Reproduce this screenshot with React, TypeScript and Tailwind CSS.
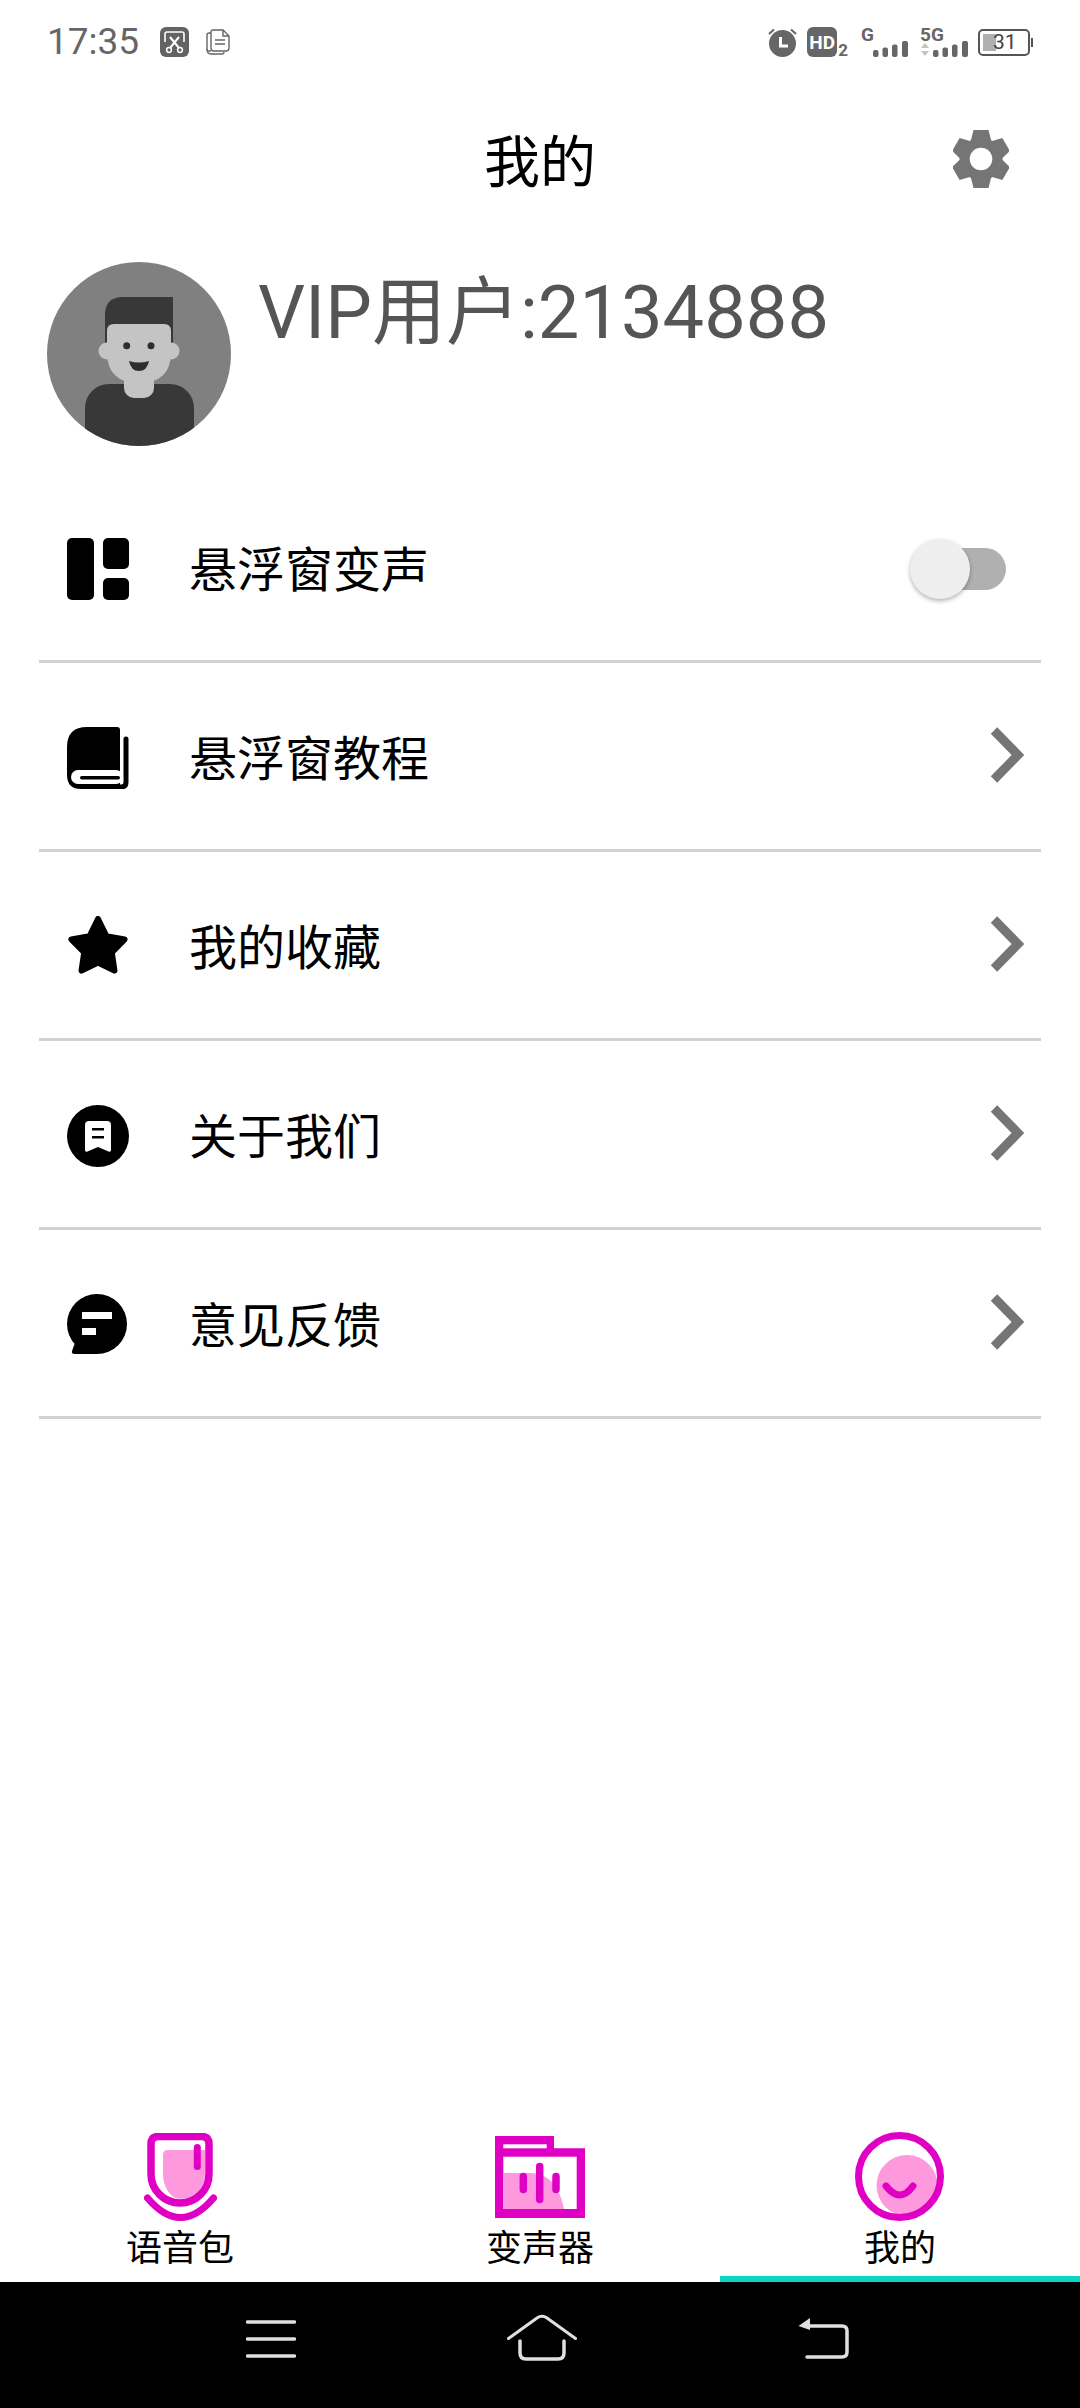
import React from "react";

const FONT = "font-['Roboto','Noto_Sans_CJK_SC',sans-serif]";

function Gear() {
  return (
    <svg width="56" height="58" viewBox="-28 -29 56 58" aria-hidden="true">
      {[0, 60, 120, 180, 240, 300].map((a) => (
        <path key={a} d="M-7.5 -29 L7.5 -29 L10.5 -17 L-10.5 -17 Z" transform={`rotate(${a})`} fill="#757575" />
      ))}
      <circle r="21.5" fill="#757575" />
      <circle r="11.3" fill="#ffffff" />
    </svg>
  );
}

function Avatar() {
  return (
    <svg width="184" height="184" viewBox="0 0 184 184" aria-hidden="true" className="shrink-0">
      <defs>
        <clipPath id="avatarClip">
          <circle cx="92" cy="92" r="92" />
        </clipPath>
      </defs>
      <circle cx="92" cy="92" r="92" fill="#808080" />
      <g clipPath="url(#avatarClip)">
        <rect x="38" y="122" width="109" height="80" rx="24" fill="#383838" />
        <rect x="77" y="100" width="30" height="36" rx="10" fill="#c4c4c4" />
        <path d="M58 82 V53 Q58 35 76 35 H126 V82 Z" fill="#383838" />
        <circle cx="60" cy="89" r="8.5" fill="#c4c4c4" />
        <circle cx="124" cy="89" r="8.5" fill="#c4c4c4" />
        <path d="M60 69 Q60 62 67 62 H117 Q124 62 124 69 V90 Q124 121 92 121 Q60 121 60 90 Z" fill="#c4c4c4" />
        <circle cx="79.7" cy="83.7" r="3.5" fill="#2e2e2e" />
        <circle cx="104" cy="83.7" r="3.5" fill="#2e2e2e" />
        <path d="M82 99 Q92 102 102 99 Q100 109 92 109 Q84 109 82 99 Z" fill="#2e2e2e" />
      </g>
    </svg>
  );
}

function IconPanels() {
  return (
    <svg width="62" height="62" viewBox="0 0 62 62" aria-hidden="true">
      <rect x="0" y="0" width="27" height="62" rx="5" />
      <rect x="36" y="0" width="26" height="31" rx="5" />
      <rect x="36" y="40" width="26" height="22" rx="5" />
    </svg>
  );
}

function IconBook() {
  return (
    <svg width="64" height="62" viewBox="0 0 64 62" aria-hidden="true">
      <path d="M0 20 Q0 0 20 0 H50 Q53 0 53 3 V62 H14 Q0 62 0 48 Z" />
      <path d="M59 12 V55 Q59 60 54 60 H30" fill="none" stroke="#000" strokeWidth="5" strokeLinecap="round" />
      <rect x="4" y="43" width="52" height="14" rx="7" fill="#fff" />
      <rect x="13" y="49" width="40" height="3.5" rx="1.7" />
    </svg>
  );
}

function IconStar() {
  return (
    <svg width="62" height="62" viewBox="0 0 62 62" aria-hidden="true">
      <polygon
        points="31,3 39.5,20.3 57.6,23.35 44.8,36.5 47.46,54.65 31,46.5 14.54,54.65 17.2,36.5 4.4,23.35 22.5,20.3"
        stroke="#000"
        strokeWidth="6"
        strokeLinejoin="round"
      />
    </svg>
  );
}

function IconAbout() {
  return (
    <svg width="62" height="62" viewBox="0 0 62 62" aria-hidden="true">
      <circle cx="31" cy="31" r="31" />
      <path d="M18 20 Q18 16 22 16 H40 Q44 16 44 20 V45 Q44 47.5 41.5 46.5 L31 42 L20.5 46.5 Q18 47.5 18 45 Z" fill="#fff" />
      <rect x="25" y="23" width="12" height="2.5" />
      <rect x="25" y="31" width="12" height="2.5" />
    </svg>
  );
}

function IconChat() {
  return (
    <svg width="62" height="62" viewBox="0 0 62 62" aria-hidden="true">
      <circle cx="30" cy="30" r="30" />
      <path d="M9 46 L5 57 Q4 60 8 60 H30 Z" />
      <rect x="15" y="18" width="30" height="7" fill="#fff" />
      <rect x="15" y="34" width="14" height="7" fill="#fff" />
    </svg>
  );
}

function Chevron() {
  return (
    <svg width="34" height="56" viewBox="0 0 34 56" aria-hidden="true">
      <path d="M4 3.5 L28 28 L4 52.5" fill="none" stroke="#757575" strokeWidth="9" />
    </svg>
  );
}

function Toggle() {
  return (
    <div className="relative h-[60px] w-[96px]">
      <div className="absolute left-[14px] top-[9px] h-[42px] w-[82px] rounded-full bg-[#b0b0b0]" />
      <div className="absolute left-0 top-0 h-[60px] w-[60px] rounded-full bg-[#eeeeee] shadow-[0_2px_4px_rgba(0,0,0,0.3)]" />
    </div>
  );
}

function Row({ icon, label, right }: { icon: React.ReactNode; label: string; right: React.ReactNode }) {
  return (
    <div className="flex h-[189px] items-center border-b-[3px] border-[#d2d2d2] pt-[3px]">
      <div className="ml-[28px] flex w-[122px] shrink-0 items-center">{icon}</div>
      <div className="flex-1 pt-[5px] text-[48px] leading-[56px] text-black">{label}</div>
      {right}
    </div>
  );
}

function TabVoice() {
  return (
    <svg width="73" height="88" viewBox="0 0 73 88" aria-hidden="true">
      <path d="M19 22 Q19 17 24 17 H61 V41 A25 25 0 0 1 36 66 A18 25 0 0 1 19 41 Z" fill="#ff99dd" />
      <path d="M7 11 Q7 3.5 14 3.5 H58 Q65 3.5 65 11 V41 A29 29 0 0 1 7 41 Z" fill="none" stroke="#e000c4" strokeWidth="7.5" />
      <path d="M53.3 14.5 V33.5" stroke="#e000c4" strokeWidth="7" strokeLinecap="round" />
      <path d="M3.5 65 Q36.5 104 69.5 65" fill="none" stroke="#e000c4" strokeWidth="7" strokeLinecap="round" />
    </svg>
  );
}

function TabChanger() {
  return (
    <svg width="90" height="82" viewBox="0 0 90 82" aria-hidden="true">
      <path d="M0 0 H59 V12.3 H90 V82 H0 Z" fill="#e000c4" />
      <rect x="8.3" y="8.3" width="43.4" height="4" fill="#fff" />
      <rect x="8.3" y="20.7" width="73.4" height="52.3" fill="#fff" />
      <path d="M8.3 73 V37 H35 Q62 37 69 73 Z" fill="#ff99dd" />
      <path d="M28.3 40.5 V53.5 M44.7 30.5 V63.5 M61 40.5 V53.5" stroke="#e000c4" strokeWidth="7.5" strokeLinecap="round" />
    </svg>
  );
}

function TabMine() {
  return (
    <svg width="90" height="90" viewBox="0 0 90 90" aria-hidden="true">
      <circle cx="52" cy="53.5" r="30.5" fill="#ff99dd" />
      <circle cx="44.5" cy="44.5" r="41" fill="none" stroke="#e000c4" strokeWidth="7" />
      <path d="M31 54 Q45 72 58 54" fill="none" stroke="#e000c4" strokeWidth="7" strokeLinecap="round" />
    </svg>
  );
}

function Tab({ icon, label, active }: { icon: React.ReactNode; label: string; active?: boolean }) {
  return (
    <div className={active ? "flex flex-col items-center border-b-[6px] border-[#0dd3c5]" : "flex flex-col items-center border-b-[6px] border-transparent"}>
      <div className="flex h-[90px] items-center">{icon}</div>
      <div className="mt-[6px] text-[36px] leading-[42px] text-black">{label}</div>
    </div>
  );
}

function StatusLeft() {
  return (
    <div className="flex items-center">
      <span className="text-[37px] leading-[44px] text-[#666666]">17:35</span>
      <svg className="ml-[21px]" width="29" height="30" viewBox="0 0 29 30" aria-hidden="true">
        <rect width="29" height="30" rx="6" fill="#636363" />
        <path d="M5 15 V7 Q5 5 7 5 H22 Q24 5 24 7 V15" fill="none" stroke="#fff" strokeWidth="1.6" />
        <path d="M10 10 L19 21 M19 10 L10 21" stroke="#fff" strokeWidth="2" />
        <circle cx="9" cy="23" r="2.4" fill="none" stroke="#fff" strokeWidth="1.5" />
        <circle cx="20" cy="23" r="2.4" fill="none" stroke="#fff" strokeWidth="1.5" />
      </svg>
      <svg className="ml-[17px]" width="24" height="26" viewBox="0 0 24 26" aria-hidden="true">
        <path d="M5 22 H3 Q1 22 1 20 V6 Q1 4 3 4 H5" fill="none" stroke="#666" strokeWidth="1.4" />
        <path d="M1 20 Q1 25 5 25 H16 Q18 25 18 23" fill="none" stroke="#666" strokeWidth="1.4" />
        <path d="M7 1 H17 L23 7 V19 Q23 22 20 22 H8 Q5 22 5 19 V3 Q5 1 7 1 Z M17 1 V7 H23" fill="#fff" stroke="#666" strokeWidth="1.4" />
        <path d="M9 11 H19 M9 15 H19" stroke="#666" strokeWidth="1.6" />
      </svg>
    </div>
  );
}

function Bars() {
  return (
    <svg width="35" height="16" viewBox="0 0 35 16" aria-hidden="true">
      <rect x="0" y="9" width="5.5" height="7" rx="2" fill="#666" />
      <rect x="9.5" y="6.5" width="5.5" height="9.5" rx="2" fill="#666" />
      <rect x="19" y="3.5" width="5.5" height="12.5" rx="2" fill="#666" />
      <rect x="29" y="0" width="6" height="16" rx="2" fill="#666" />
    </svg>
  );
}

function StatusRight() {
  return (
    <div className="flex items-center">
      <svg width="31" height="30" viewBox="0 0 31 30" aria-hidden="true">
        <path d="M2 7 L7 2.5 M29 7 L24 2.5" stroke="#666" strokeWidth="2.2" />
        <circle cx="15.5" cy="16.5" r="13.5" fill="#666" />
        <path d="M13.5 10 V19 H21" fill="none" stroke="#fff" strokeWidth="3" />
      </svg>
      <div className="ml-[9px] flex items-end">
        <div className="flex h-[30px] w-[30px] items-center justify-center rounded-[6px] bg-[#666666] text-[19px] font-bold leading-none text-white">HD</div>
        <span className="ml-[1px] text-[17px] font-bold leading-[14px] text-[#666666]">2</span>
      </div>
      <div className="relative ml-[13px] h-[30px] w-[47px]">
        <span className="absolute left-0 top-[-1px] text-[19px] font-bold leading-[18px] text-[#666666]">G</span>
        <div className="absolute bottom-0 right-0 flex"><Bars /></div>
      </div>
      <div className="relative ml-[12px] h-[30px] w-[48px]">
        <span className="absolute left-0 top-[-1px] text-[19px] font-bold leading-[18px] text-[#666666]">5G</span>
        <svg className="absolute bottom-0 left-0" width="10" height="14" viewBox="0 0 10 14" aria-hidden="true">
          <path d="M5 0 L9 5 H1 Z M1 8 H9 L5 13 Z" fill="#c4c4c4" />
        </svg>
        <div className="absolute bottom-0 right-0 flex"><Bars /></div>
      </div>
      <div className="relative ml-[10px] flex h-[27px] w-[52px] items-center rounded-[5px] border-[2px] border-[#555555]">
        <div className="ml-[3px] h-[17px] w-[13px] bg-[#b0b0b0]" />
        <span className="absolute left-[13px] top-[1px] text-[21px] leading-[21px] text-[#444444]">31</span>
      </div>
      <div className="ml-[1px] h-[9px] w-[2px] bg-[#555555]" />
    </div>
  );
}

function NavBar() {
  return (
    <div className="flex h-[126px] items-start bg-black pl-[246px] pt-[38px]">
      <svg width="50" height="40" viewBox="0 0 50 40" aria-hidden="true">
        <path d="M1.5 2 H48.5 M1.5 19 H48.5 M1.5 36 H48.5" stroke="#e0e0e0" strokeWidth="3.5" strokeLinecap="round" />
      </svg>
      <svg className="ml-[211px] mt-[-6px]" width="70" height="48" viewBox="0 0 70 48" aria-hidden="true">
        <path d="M1.5 24.5 L30 4 Q35 0.5 40 4 L68.5 24.5" fill="none" stroke="#e0e0e0" strokeWidth="3" strokeLinecap="round" />
        <path d="M13 27 V39 Q13 45 19 45 H51 Q57 45 57 39 V27" fill="none" stroke="#e0e0e0" strokeWidth="3.5" strokeLinecap="round" />
      </svg>
      <svg className="ml-[221px] mt-[-3px]" width="52" height="44" viewBox="0 0 52 44" aria-hidden="true">
        <path d="M0.5 9 L12 1 V13 Z" fill="#e0e0e0" />
        <path d="M10 9 H44 Q49 9 49 14 V35 Q49 40 44 40 H9" fill="none" stroke="#e0e0e0" strokeWidth="3.5" strokeLinecap="round" />
      </svg>
    </div>
  );
}

export default function App() {
  return (
    <div className={`${FONT} flex h-[2408px] w-[1080px] flex-col bg-white`}>
      <div className="flex h-[84px] items-center justify-between pl-[47px] pr-[47px]">
        <StatusLeft />
        <StatusRight />
      </div>

      <div className="relative flex h-[152px] items-center justify-center">
        <h1 className="pt-[6px] text-[56px] font-normal leading-[64px] text-black">我的</h1>
        <div className="absolute right-[71px] top-[46px]">
          <Gear />
        </div>
      </div>

      <div className="mt-[26px] flex items-start pl-[47px]">
        <Avatar />
        <div className="ml-[27px] mt-[9px] text-[74px] leading-[84px] text-[#555555]">VIP用户:2134888</div>
      </div>

      <div className="mx-[39px] mt-[28px]">
        <Row icon={<IconPanels />} label="悬浮窗变声" right={<div className="mr-[35px]"><Toggle /></div>} />
        <Row icon={<IconBook />} label="悬浮窗教程" right={<div className="mb-[6px] mr-[17px]"><Chevron /></div>} />
        <Row icon={<IconStar />} label="我的收藏" right={<div className="mb-[6px] mr-[17px]"><Chevron /></div>} />
        <Row icon={<IconAbout />} label="关于我们" right={<div className="mb-[6px] mr-[17px]"><Chevron /></div>} />
        <Row icon={<IconChat />} label="意见反馈" right={<div className="mb-[6px] mr-[17px]"><Chevron /></div>} />
      </div>

      <div className="flex-1" />

      <div className="grid h-[150px] grid-cols-3 bg-white">
        <Tab icon={<TabVoice />} label="语音包" />
        <Tab icon={<TabChanger />} label="变声器" />
        <Tab icon={<TabMine />} label="我的" active />
      </div>

      <NavBar />
    </div>
  );
}
